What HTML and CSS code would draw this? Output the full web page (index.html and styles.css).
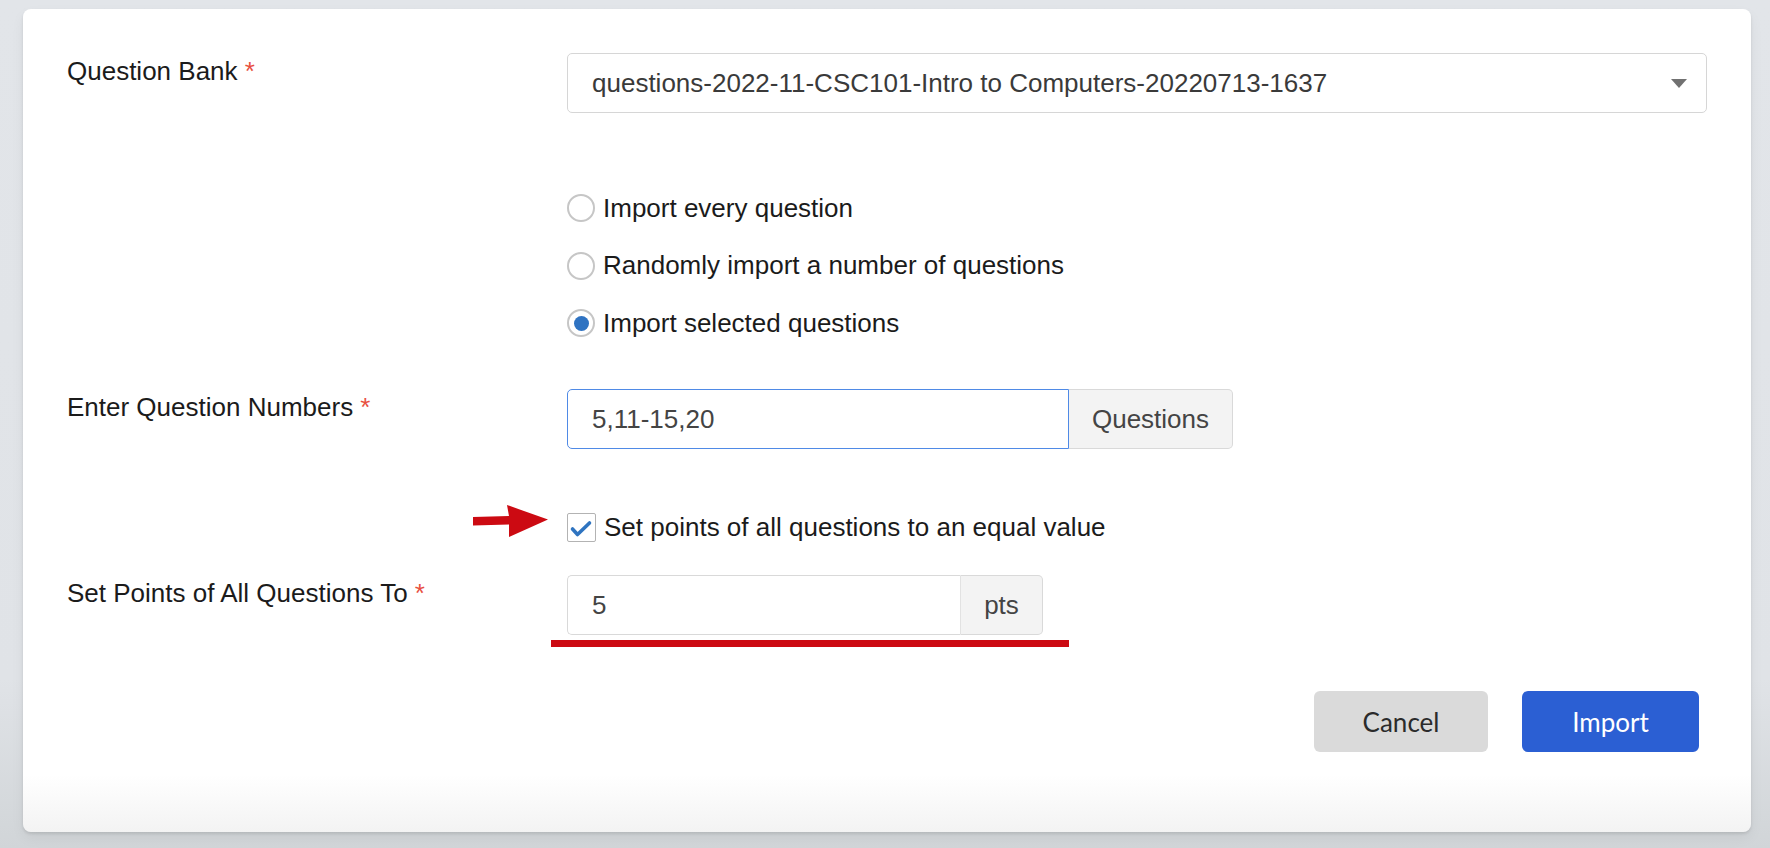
FILE: index.html
```html
<!DOCTYPE html>
<html>
<head>
<meta charset="utf-8">
<link rel="stylesheet" href="styles.css">
</head>
<body>
<div class="card">
  <div class="row row-bank">
    <div class="label">Question Bank <span class="req">*</span></div>
    <div class="control">
      <div class="select">
        <span class="select-text">questions-2022-11-CSC101-Intro to Computers-20220713-1637</span>
        <span class="caret"></span>
      </div>
    </div>
  </div>

  <div class="row row-radios">
    <div class="label"></div>
    <div class="control radios">
      <div class="choice"><span class="radio"></span><span class="choice-text">Import every question</span></div>
      <div class="choice"><span class="radio"></span><span class="choice-text">Randomly import a number of questions</span></div>
      <div class="choice"><span class="radio checked"></span><span class="choice-text">Import selected questions</span></div>
    </div>
  </div>

  <div class="row row-numbers">
    <div class="label">Enter Question Numbers <span class="req">*</span></div>
    <div class="control">
      <div class="group group-questions">
        <div class="field focused">5,11-15,20</div>
        <div class="addon">Questions</div>
      </div>
    </div>
  </div>

  <div class="row row-check">
    <div class="label"></div>
    <div class="control check-control">
      <svg class="red-arrow" width="76" height="34" viewBox="0 0 76 34">
        <polygon points="0,12 36,11 34,0 75,14.5 36,32 36,19.5 0,20.5" fill="#cc0a12"/>
      </svg>
      <div class="choice">
        <span class="checkbox">
          <svg width="29" height="29" viewBox="0 0 29 29"><path d="M5.5 16 L10.5 21.5 L22.5 10" fill="none" stroke="#2f74c0" stroke-width="3.6" stroke-linecap="round" stroke-linejoin="round"/></svg>
        </span>
        <span class="choice-text">Set points of all questions to an equal value</span>
      </div>
    </div>
  </div>

  <div class="row row-points">
    <div class="label">Set Points of All Questions To <span class="req">*</span></div>
    <div class="control points-control">
      <div class="group group-points">
        <div class="field">5</div>
        <div class="addon">pts</div>
      </div>
      <div class="red-line"></div>
    </div>
  </div>

  <div class="actions">
    <button class="btn btn-cancel">Cancel</button>
    <button class="btn btn-import">Import</button>
  </div>
</div>
</body>
</html>
```

FILE: styles.css
```css
html, body {
  margin: 0;
  padding: 0;
}
body {
  width: 1770px;
  height: 848px;
  overflow: hidden;
  background: linear-gradient(to bottom, #e2e5e9 0%, #e0e3e7 80%, #d1d5d8 100%);
  font-family: "Liberation Sans", Arial, sans-serif;
  color: #1b1b1b;
  box-sizing: border-box;
  padding: 9px 19px 0 23px;
}
.card {
  box-sizing: border-box;
  height: 823px;
  background: linear-gradient(to bottom, #ffffff 0%, #ffffff 93%, #f3f3f3 100%);
  border-radius: 8px;
  box-shadow: 0 2px 3px rgba(0,0,0,0.10), 0 6px 14px rgba(0,0,0,0.05);
  padding: 44px 44px 0 44px;
  display: flex;
  flex-direction: column;
}
.row {
  display: grid;
  grid-template-columns: 500px 1fr;
}
.label {
  font-size: 26px;
  line-height: 36px;
  color: #1b1b1b;
  padding-top: 0;
}
.req {
  color: #e8503f;
}
.control {
  position: relative;
}

/* select */
.select {
  box-sizing: border-box;
  height: 60px;
  border: 1px solid #d6d6d6;
  border-radius: 5px;
  display: flex;
  align-items: center;
  padding: 0 19px 0 24px;
  background: #fff;
}
.select-text {
  flex: 1;
  font-size: 26px;
  color: #3a3a3a;
  white-space: nowrap;
}
.caret {
  width: 0;
  height: 0;
  border-left: 8px solid transparent;
  border-right: 8px solid transparent;
  border-top: 9px solid #717171;
}

/* radios */
.row-radios {
  margin-top: 80px;
}
.radios {
  display: flex;
  flex-direction: column;
  gap: 27.5px;
}
.choice {
  display: flex;
  align-items: center;
  height: 30px;
  gap: 8px;
}
.choice-text {
  font-size: 26px;
  color: #1b1b1b;
  white-space: nowrap;
}
.radio {
  box-sizing: border-box;
  width: 28px;
  height: 28px;
  border: 2.5px solid #c6c6c6;
  border-radius: 50%;
  display: flex;
  align-items: center;
  justify-content: center;
  background: #fff;
}
.radio.checked::after {
  content: "";
  width: 15px;
  height: 15px;
  border-radius: 50%;
  background: #2f73c2;
}

/* input groups */
.row-numbers {
  margin-top: 51px;
}
.group {
  display: flex;
  height: 60px;
  box-sizing: border-box;
}
.field {
  box-sizing: border-box;
  height: 60px;
  border: 1px solid #d9d9d9;
  border-right: none;
  border-radius: 5px 0 0 5px;
  font-size: 26px;
  color: #444;
  display: flex;
  align-items: center;
  padding-left: 24px;
  background: #fff;
}
.field.focused {
  border: 1px solid #4f8ae6;
}
.addon {
  box-sizing: border-box;
  height: 60px;
  border: 1px solid #d9d9d9;
  border-left: none;
  border-radius: 0 5px 5px 0;
  background: #f3f3f3;
  font-size: 26px;
  color: #444;
  display: flex;
  align-items: center;
  justify-content: center;
}
.group-questions .field { width: 502px; }
.group-questions .addon { width: 164px; }
.group-points .field { width: 394px; border-right: 1px solid #e2e2e2; }
.group-points .addon { width: 82px; }

/* checkbox */
.row-check {
  margin-top: 63px;
}
.checkbox {
  box-sizing: border-box;
  width: 29px;
  height: 29px;
  border: 1px solid #b3b3b3;
  border-radius: 2px;
  background: #fff;
  display: block;
  position: relative;
}
.checkbox svg {
  position: absolute;
  left: -1px;
  top: -1px;
}
.check-control .choice {
  gap: 8px;
}
.red-arrow {
  position: absolute;
  left: -94px;
  top: -7px;
}

/* points */
.row-points {
  margin-top: 33px;
}
.red-line {
  position: absolute;
  left: -16px;
  top: 65px;
  width: 518px;
  height: 7px;
  background: #cc0a12;
}

/* actions */
.actions {
  margin-top: 56px;
  display: flex;
  justify-content: flex-end;
  gap: 34px;
  padding-right: 8px;
}
.btn {
  height: 61px;
  border: none;
  border-radius: 6px;
  font-family: Lato, "Open Sans", sans-serif;
  font-size: 26px;
  padding: 0;
  cursor: pointer;
}
.btn-cancel {
  width: 174px;
  background: #dadada;
  color: #2b2b2b;
}
.btn-import {
  width: 177px;
  background: #2b5fd3;
  color: #ffffff;
}
```
